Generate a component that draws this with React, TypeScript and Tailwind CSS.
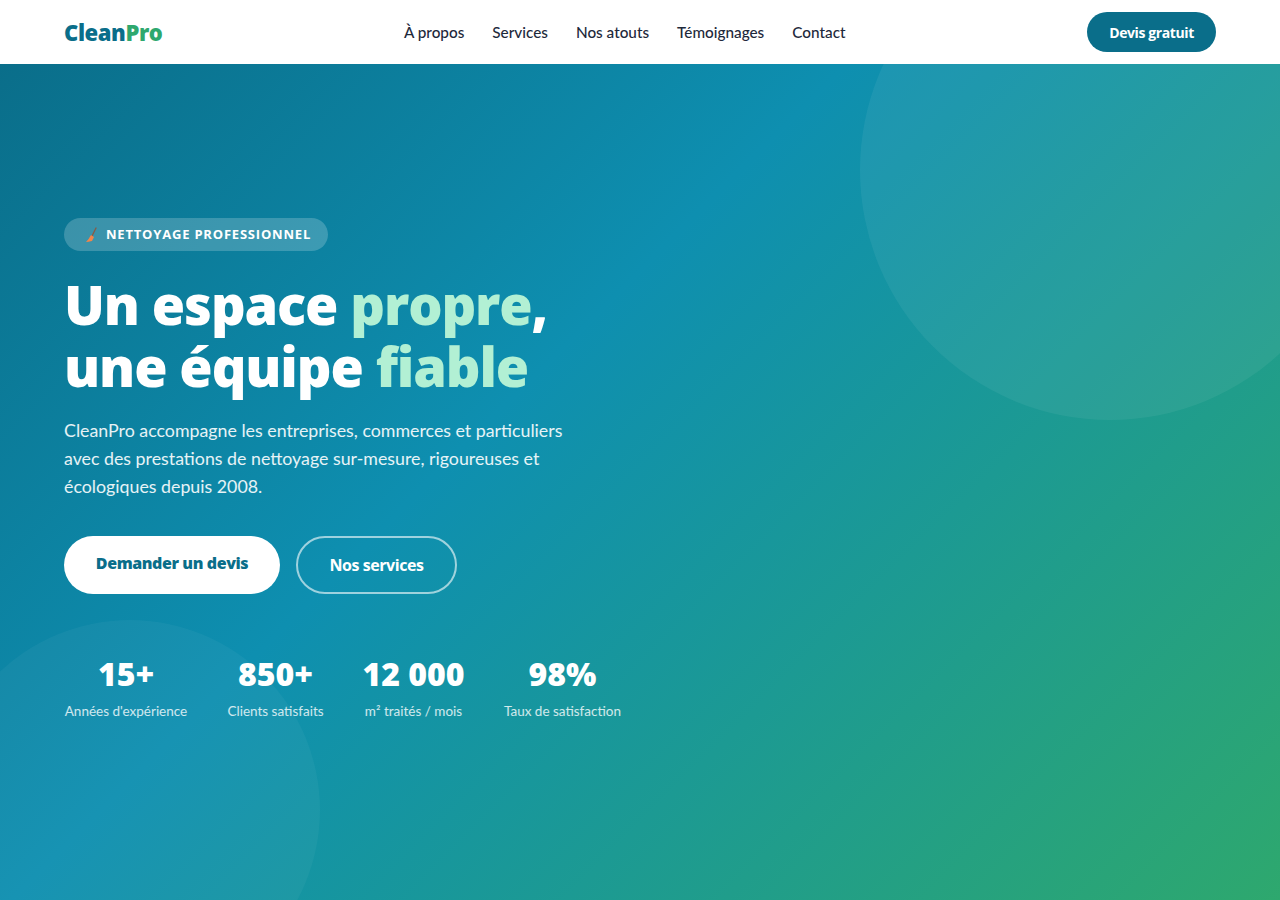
import React from 'react';

const navLinks = ['À propos', 'Services', 'Nos atouts', 'Témoignages', 'Contact'];

const stats = [
  { value: '15+', label: "Années d'expérience", width: 'w-[124px]' },
  { value: '850+', label: 'Clients satisfaits', width: 'w-[95px]' },
  { value: '12 000', label: 'm² traités / mois', width: 'w-[101px]' },
  { value: '98%', label: 'Taux de satisfaction', width: 'w-[117px]' },
];

const Broom = () => (
  <svg viewBox="0 0 14 16" className="w-[14px] h-4 mr-2 shrink-0">
    <path d="M12 1 L8 9" stroke="#8a5a44" strokeWidth="1.3" strokeLinecap="round" />
    <path d="M7 8 L10 10 L8 14 Q4 15 2 15 Q5 12 7 8 Z" fill="#f2854a" />
  </svg>
);

const App: React.FC = () => {
  return (
    <div className="h-[900px] overflow-hidden font-['Open_Sans','Noto_Sans',sans-serif]">
      {/* Navbar */}
      <nav className="h-16 bg-white px-16 flex items-center justify-between">
        <div className="text-[22px] font-extrabold tracking-[-0.4px]">
          <span className="text-[#0a6e8a]">Clean</span>
          <span className="text-[#2ea86e]">Pro</span>
        </div>
        <ul className="flex items-center gap-7 pt-[1px] font-['Lato',sans-serif] text-[15.3px] font-medium text-[#1e293b]">
          {navLinks.map((link) => (
            <li key={link}>{link}</li>
          ))}
        </ul>
        <button className="h-10 w-[129px] rounded-full bg-[#0a6e8a] text-white text-[14px] font-bold tracking-[-0.4px]">
          Devis gratuit
        </button>
      </nav>

      {/* Hero */}
      <section className="relative h-[836px] overflow-hidden bg-[linear-gradient(135deg,#0a6e8a_0%,#0e8fb0_40%,#2ea86e_100%)] px-16 pt-[154px]">
        <div className="absolute top-[-144px] -right-[80px] w-[500px] h-[500px] rounded-full bg-white/[0.06]" />
        <div className="absolute -bottom-[100px] -left-[60px] w-[380px] h-[380px] rounded-full bg-white/[0.04]" />

        <div className="relative">
          <div className="inline-flex items-center h-[33px] pl-5 w-[264px] rounded-full bg-white/20 text-white text-[13px] font-bold tracking-[0.8px]">
            <Broom />
            NETTOYAGE PROFESSIONNEL
          </div>

          <h1 className="mt-[22px] text-[54px] leading-[62px] font-extrabold text-white tracking-[-1.1px]">
            Un espace <span className="text-[#b2f0d4]">propre</span>,
            <br />
            une équipe <span className="text-[#b2f0d4]">fiable</span>
          </h1>

          <p className="mt-[19px] w-[520px] font-['Lato',sans-serif] text-[17.8px] leading-[28px] text-white/90">
            CleanPro accompagne les entreprises, commerces et particuliers avec des prestations de nettoyage sur-mesure, rigoureuses et écologiques depuis 2008.
          </p>

          <div className="mt-[36px] flex items-center gap-4">
            <button className="h-[58px] w-[216px] pb-1 rounded-full bg-white text-[#0a6e8a] text-[16px] font-extrabold tracking-[-0.4px]">
              Demander un devis
            </button>
            <button className="h-[58px] w-[161px] rounded-full border-2 border-white/60 text-white text-[16px] font-bold tracking-[-0.45px]">
              Nos services
            </button>
          </div>

          <div className="mt-[56px] flex gap-10">
            {stats.map((stat) => (
              <div key={stat.label} className={`flex flex-col items-center whitespace-nowrap ${stat.width}`}>
                <div className="text-[32px] leading-[48px] font-extrabold text-white">{stat.value}</div>
                <div className="mt-[3px] font-['Lato',sans-serif] text-[13.5px] leading-5 text-white/80">{stat.label}</div>
              </div>
            ))}
          </div>
        </div>
      </section>
    </div>
  );
};

export default App;
